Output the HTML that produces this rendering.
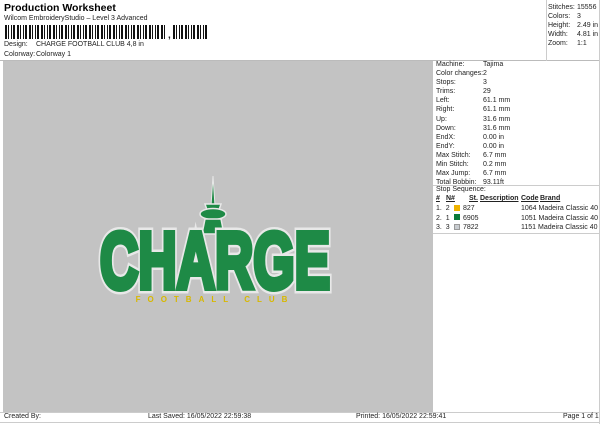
<!DOCTYPE html><html><head><meta charset="utf-8"><style>
*{margin:0;padding:0;box-sizing:border-box}
body{width:600px;height:424px;background:#fff;font-family:"Liberation Sans",Arial,sans-serif;font-size:7px;color:#222;position:relative;overflow:hidden}
.a{position:absolute;white-space:nowrap}
.bc{position:absolute;top:25px;height:14px;background:repeating-linear-gradient(90deg,#111 0 2px,#fff 2px 3px,#111 3px 4px,#fff 4px 6px,#111 6px 7px,#fff 7px 8px,#111 8px 10px,#fff 10px 12px)}
</style></head><body>
<div class="a" style="left:4px;top:2px;font-size:10.5px;font-weight:bold;color:#000">Production Worksheet</div>
<div class="a" style="left:4px;top:15px">Wilcom EmbroideryStudio – Level 3 Advanced</div>
<div class="bc" style="left:5px;width:162px"></div>
<div class="a" style="left:168px;top:30px;font-size:10px;font-weight:bold">,</div>
<div class="bc" style="left:173px;width:36px"></div>
<div class="a" style="left:4px;top:41px">Design:</div>
<div class="a" style="left:36px;top:41px">CHARGE FOOTBALL CLUB 4,8 in</div>
<div class="a" style="left:4px;top:51px">Colorway:</div>
<div class="a" style="left:36px;top:51px">Colorway 1</div>
<div class="a" style="left:0;top:60px;width:600px;border-top:1px solid #bbb"></div>
<div class="a" style="left:3px;top:61px;width:430px;height:351px;background:#c3c3c3"></div>
<div class="a" style="left:546px;top:0;height:61px;border-left:1px solid #ccc"></div>
<div class="a" style="left:599px;top:0;height:424px;border-left:1px solid #ccc"></div>
<div class="a" style="left:548px;top:3px;line-height:9.1px">Stitches:<br>Colors:<br>Height:<br>Width:<br>Zoom:</div>
<div class="a" style="left:577px;top:3px;line-height:9.1px">15556<br>3<br>2.49 in<br>4.81 in<br>1:1</div>
<div class="a" style="left:436px;top:60px;line-height:9.1px">Machine:<br>Color changes:<br>Stops:<br>Trims:<br>Left:<br>Right:<br>Up:<br>Down:<br>EndX:<br>EndY:<br>Max Stitch:<br>Min Stitch:<br>Max Jump:<br>Total Bobbin:</div>
<div class="a" style="left:483px;top:60px;line-height:9.1px">Tajima<br>2<br>3<br>29<br>61.1 mm<br>61.1 mm<br>31.6 mm<br>31.6 mm<br>0.00 in<br>0.00 in<br>6.7 mm<br>0.2 mm<br>6.7 mm<br>93.11ft</div>
<div class="a" style="left:433px;top:185px;width:166px;border-top:1px solid #ccc"></div>
<div class="a" style="left:436px;top:186px">Stop Sequence:</div>
<div class="a" style="left:436px;top:195px;font-weight:bold;text-decoration:underline">#</div>
<div class="a" style="left:446px;top:195px;font-weight:bold;text-decoration:underline">N#</div>
<div class="a" style="left:469px;top:195px;font-weight:bold;text-decoration:underline">St.</div>
<div class="a" style="left:480px;top:195px;font-weight:bold;text-decoration:underline">Description</div>
<div class="a" style="left:521px;top:195px;font-weight:bold;text-decoration:underline">Code</div>
<div class="a" style="left:540px;top:195px;font-weight:bold;text-decoration:underline">Brand</div>
<div class="a" style="left:436px;top:204px;line-height:9.6px">1.&nbsp; 2<br>2.&nbsp; 1<br>3.&nbsp; 3</div>
<div class="a" style="left:454px;top:205px;width:6px;height:6px;background:#f0b400"></div>
<div class="a" style="left:454px;top:214px;width:6px;height:6px;background:#0a7a3a"></div>
<div class="a" style="left:454px;top:224px;width:6px;height:6px;background:#c8ccd0;border:1px solid #999"></div>
<div class="a" style="left:463px;top:204px;line-height:9.6px">827<br>6905<br>7822</div>
<div class="a" style="left:521px;top:204px;line-height:9.6px">1064 Madeira Classic 40<br>1051 Madeira Classic 40<br>1151 Madeira Classic 40</div>
<div class="a" style="left:433px;top:233px;width:166px;border-top:1px solid #ccc"></div>
<svg class="a" style="left:0;top:0" width="600" height="424">
<g fill="#1e8a46" stroke="#e8e8e8" stroke-width="1.5">
<path d="M213 176 L215 206 L211 206 Z" stroke-width="1"/>
<path d="M207 210 L219 210 L221 204 L205 204 Z"/>
<ellipse cx="213" cy="214" rx="13" ry="5.5"/>
<path d="M205 219 L221 219 L224 234 L202 234 Z"/>
</g>
<g font-family="Liberation Sans" font-weight="bold" font-size="80">
<text x="100" y="288" textLength="230" lengthAdjust="spacingAndGlyphs" fill="#e8e8e8" stroke="#e8e8e8" stroke-width="11" stroke-linejoin="miter">CHARGE</text>
<text x="100" y="288" textLength="230" lengthAdjust="spacingAndGlyphs" fill="#1e8a46" stroke="#1e8a46" stroke-width="6" stroke-linejoin="miter">CHARGE</text>
</g>
<text x="215" y="302" text-anchor="middle" font-family="Liberation Sans" font-weight="bold" font-size="8" fill="#d8b800" letter-spacing="7">FOOTBALL CLUB</text>
</svg>
<div class="a" style="left:0;top:412px;width:600px;border-top:1px solid #ccc"></div>
<div class="a" style="left:0;top:422px;width:600px;border-top:1px solid #ccc"></div>
<div class="a" style="left:4px;top:413px">Created By:</div>
<div class="a" style="left:148px;top:413px">Last Saved: 16/05/2022 22:59:38</div>
<div class="a" style="left:356px;top:413px">Printed: 16/05/2022 22:59:41</div>
<div class="a" style="left:563px;top:413px">Page 1 of 1</div>
</body></html>
